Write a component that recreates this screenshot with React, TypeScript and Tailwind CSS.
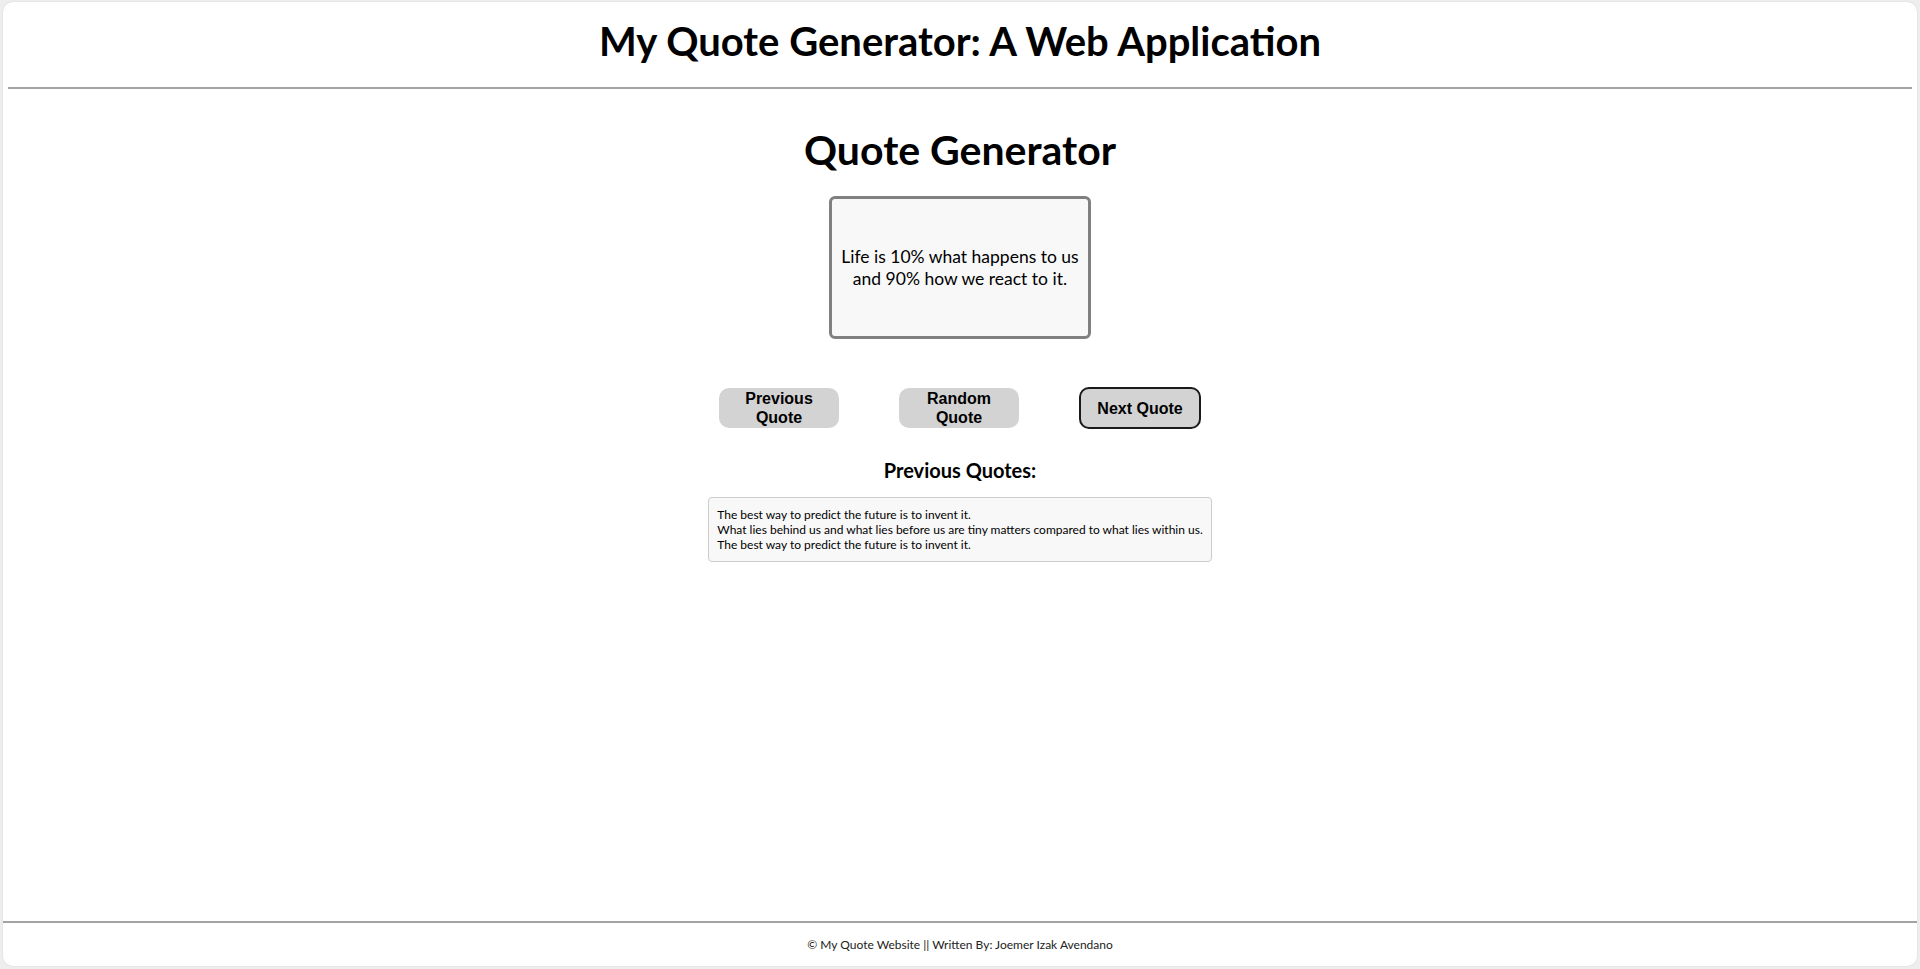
import React from "react";

const gill = { fontFamily: '"Lato", "Open Sans", sans-serif' };

export default function App() {
  return (
    <div className="h-[969px] w-full bg-[#eeeeee] px-[3px] pt-[2px] pb-[3px]" style={gill}>
      <div className="flex h-full flex-col rounded-[10px] bg-white shadow-[0_0_2px_rgba(0,0,0,0.12)]">
        <header className="px-[5px] pt-[15px]">
          <h1 className="text-center text-[40px] leading-[48px] font-bold text-black">
            My Quote Generator: A Web Application
          </h1>
          <div className="mt-[22px] h-[2px] bg-[#a3a3a3]" />
        </header>
        <main className="flex flex-1 flex-col items-center">
          <h2 className="mt-[37px] text-center text-[41px] leading-[48px] font-bold text-black">
            Quote Generator
          </h2>
          <div className="mt-[22px] flex h-[143px] w-[262px] items-center justify-center rounded-[6px] border-[3px] border-[#808080] bg-[#f8f8f8] px-[6px] text-center text-[17.5px] leading-[22px] text-black">
            <p>
              Life is 10% what happens to us
              <br />
              and 90% how we react to it.
            </p>
          </div>
          <div
            className="mt-[48px] flex items-center gap-[60px] text-[16px] leading-[19px] font-bold text-black"
            style={{ fontFamily: '"Liberation Sans", Arial, sans-serif' }}
          >
            <button className="h-[40px] w-[120px] rounded-[10px] bg-[#d3d3d3] px-[10px]">
              Previous Quote
            </button>
            <button className="h-[40px] w-[120px] rounded-[10px] bg-[#d3d3d3] px-[10px]">
              Random Quote
            </button>
            <button className="h-[42px] w-[122px] rounded-[10px] border-2 border-[#1a1a1a] bg-[#d3d3d3] px-[10px]">
              Next Quote
            </button>
          </div>
          <h3 className="mt-[29px] text-center text-[20px] leading-[24px] font-bold text-black">
            Previous Quotes:
          </h3>
          <div className="mt-[15px] rounded-[4px] border border-[#cccccc] bg-[#f8f8f8] px-[8px] py-[9px] text-[12px] leading-[15px] text-black">
            <div>The best way to predict the future is to invent it.</div>
            <div>What lies behind us and what lies before us are tiny matters compared to what lies within us.</div>
            <div>The best way to predict the future is to invent it.</div>
          </div>
        </main>
        <footer className="flex h-[45px] items-center justify-center border-t-2 border-[#a3a3a3] text-[12px] text-[#222]">
          © My Quote Website || Written By: Joemer Izak Avendano
        </footer>
      </div>
    </div>
  );
}
